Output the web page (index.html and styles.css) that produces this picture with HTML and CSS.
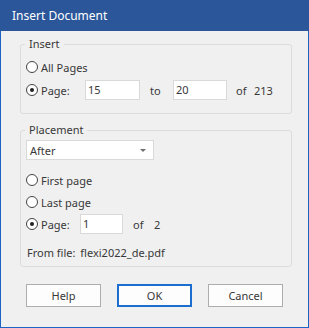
FILE: index.html
```html
<!DOCTYPE html>
<html lang="en">
<head>
  <meta charset="UTF-8" />
  <title>Insert Document</title>
  <link rel="stylesheet" href="styles.css">
</head>
<body>
  <div class="window">
    <div class="titlebar">Insert Document</div>

    <div class="content">
      <!-- Insert -->
      <fieldset class="group group-insert">
        <legend>Insert</legend>
        <div class="row">
          <span class="radio"></span>
          <span>All Pages</span>
        </div>
        <div class="row">
          <span class="radio checked"></span>
          <span class="page-label">Page:</span>
          <span class="field field-wide">15</span>
          <span class="to-label">to</span>
          <span class="field field-wide2">20</span>
          <span class="of-label">of</span>
          <span>213</span>
        </div>
      </fieldset>

      <!-- Placement -->
      <fieldset class="group group-placement">
        <legend>Placement</legend>
        <div class="select">
          <span>After</span>
          <span class="arrow"></span>
        </div>
        <div class="radio-list">
          <div class="row">
            <span class="radio"></span>
            <span>First page</span>
          </div>
          <div class="row">
            <span class="radio"></span>
            <span>Last page</span>
          </div>
          <div class="row">
            <span class="radio checked"></span>
            <span class="page-label short">Page:</span>
            <span class="field field-small">1</span>
            <span class="of-label wide">of</span>
            <span>2</span>
          </div>
        </div>
        <div class="from-file">
          <span class="from-label">From file:</span>
          <span>flexi2022_de.pdf</span>
        </div>
      </fieldset>

      <div class="buttons">
        <button class="btn">Help</button>
        <button class="btn btn-default">OK</button>
        <button class="btn">Cancel</button>
      </div>
    </div>
  </div>
</body>
</html>
```

FILE: styles.css
```css
html, body {
  margin: 0;
  padding: 0;
}

body {
  font-family: "Noto Sans", "Liberation Sans", sans-serif;
  font-size: 11px;
  color: #383838;
  background: #f0f0f0;
}

.window {
  width: 309px;
  height: 328px;
  box-sizing: border-box;
  border: 1px solid #1b64c6;
  border-top: none;
  background: #f0f0f0;
  display: flex;
  flex-direction: column;
}

.titlebar {
  height: 31px;
  margin: 0 -1px;
  padding-left: 12px;
  background: #2b579a;
  color: #fff;
  font-size: 12px;
  line-height: 31px;
}

.content {
  padding: 0 16px 0 19px;
}

.group {
  margin: 0;
  min-width: 0;
  border: 1px solid #dcdcdc;
  border-radius: 3px;
  padding: 0 5px;
}

.group legend {
  margin-left: -1px;
  padding: 0 4px;
  line-height: 12px;
  height: 12px;
}

.group-insert {
  margin-top: 7px;
  padding-top: 7px;
  padding-bottom: 13px;
}

.group-insert .row + .row {
  margin-top: 3px;
}

.group-placement {
  margin-top: 10px;
  padding-top: 4px;
  padding-bottom: 6px;
}

.row {
  display: flex;
  align-items: center;
  height: 20px;
}

.radio {
  width: 12px;
  height: 12px;
  box-sizing: border-box;
  border: 1px solid #444;
  border-radius: 50%;
  background: #fff;
  margin-right: 3px;
  display: flex;
  align-items: center;
  justify-content: center;
  flex: none;
}

.radio.checked::after {
  content: "";
  width: 4px;
  height: 4px;
  border-radius: 50%;
  background: #222;
}

.page-label {
  width: 44px;
}

.page-label.short {
  width: 39px;
}

.field {
  height: 20px;
  box-sizing: border-box;
  border: 1px solid #d9d9d9;
  background: #fff;
  padding-left: 2px;
  line-height: 18px;
  flex: none;
}

.field-wide {
  width: 55px;
}

.field-wide2 {
  width: 54px;
}

.field-small {
  width: 43px;
}

.to-label {
  margin-left: 10px;
  width: 23px;
}

.of-label {
  margin-left: 9px;
  width: 18px;
}

.of-label.wide {
  margin-left: 10px;
  width: 21px;
}

.select {
  display: flex;
  align-items: center;
  justify-content: space-between;
  width: 128px;
  height: 20px;
  box-sizing: border-box;
  border: 1px solid #d9d9d9;
  background: #fff;
  padding: 0 7px 0 3px;
}

.arrow {
  width: 0;
  height: 0;
  border-left: 3px solid transparent;
  border-right: 3px solid transparent;
  border-top: 3px solid #707070;
}

.radio-list {
  margin-top: 10px;
  display: flex;
  flex-direction: column;
  gap: 2px;
}

.from-file {
  margin-top: 12px;
  line-height: 14px;
}

.from-label {
  margin-left: 1px;
  margin-right: 2px;
}

.buttons {
  display: flex;
  gap: 16px;
  margin-top: 17px;
  padding-left: 6px;
}

.btn {
  width: 75px;
  height: 23px;
  box-sizing: border-box;
  border: 1px solid #adadad;
  background: #fdfdfd;
  font-family: "Noto Sans", "Liberation Sans", sans-serif;
  font-size: 11px;
  color: #383838;
  padding: 0;
}

.btn-default {
  border: 2px solid #1b6ed0;
}
```
